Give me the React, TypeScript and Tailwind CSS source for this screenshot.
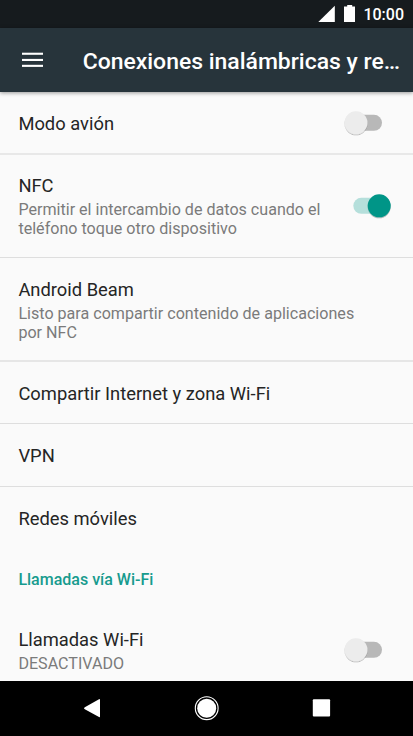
import React from "react";

function Toggle({ on = false }: { on?: boolean }) {
  return (
    <svg className="block h-8 w-[60px] shrink-0" viewBox="0 0 60 32" role="switch" aria-checked={on}>
      <defs>
        <filter id="thumb-shadow" x="-30%" y="-30%" width="160%" height="170%">
          <feDropShadow dx="0" dy="0.9" stdDeviation="0.7" floodColor="#000" floodOpacity="0.32" />
        </filter>
      </defs>
      <rect x={on ? 13.3 : 9} y="7.8" width="33" height="16" rx="8" fill={on ? "#b5dfdb" : "#b8b8b8"} />
      <circle cx={on ? 39.2 : 16} cy="15.8" r="11.5" fill={on ? "#009587" : "#ececec"} filter="url(#thumb-shadow)" />
    </svg>
  );
}

function Title({ children }: { children: React.ReactNode }) {
  return <div className="text-[18.35px] leading-[26px] whitespace-nowrap text-[#252525]">{children}</div>;
}

function Summary({ children }: { children: React.ReactNode }) {
  return <div className="pt-px text-[16.1px] leading-[19px] whitespace-nowrap text-[#7b7b7b]">{children}</div>;
}

export default function App() {
  return (
    <div className="flex h-[736px] w-[413px] flex-col overflow-hidden bg-[#fafafa] font-['Roboto',sans-serif]">
      <div className="flex h-7 shrink-0 items-center justify-end bg-[#161b1e] pr-[9px] text-white">
        <svg className="block h-7 w-[46px]" viewBox="0 0 46 28" fill="#fff">
          <path d="M1.3 22H17.8V5.7Z" />
          <path d="M30.2 5H35.2V6.5H38V22H27V6.5H30.2Z" />
        </svg>
        <span className="w-[41px] pt-0.5 text-right text-base leading-7 font-medium whitespace-nowrap">10:00</span>
      </div>
      <header className="z-10 flex h-16 shrink-0 items-center bg-[#27343b] pl-[21.5px] shadow-[0_1px_4px_rgba(0,0,0,0.4)]">
        <svg className="block h-4 w-[21.5px]" viewBox="0 0 21.5 16" fill="#fff">
          <rect y="0.7" width="21.5" height="2.1" />
          <rect y="6.9" width="21.5" height="2.1" />
          <rect y="12.8" width="21.5" height="2.1" />
        </svg>
        <h1 className="ml-[39.7px] pt-[3px] text-[22.95px] leading-8 font-medium whitespace-nowrap text-white">
          Conexiones inalámbricas y re…
        </h1>
      </header>
      <main className="flex min-h-0 flex-1 flex-col overflow-hidden pt-px">
        <section className="flex h-[62px] shrink-0 items-center justify-between border-b-2 border-[#e8e8e8] pr-[13px] pb-px pl-[18.4px]">
          <div className="pt-[2px]">
            <Title>Modo avión</Title>
          </div>
          <Toggle />
        </section>
        <section className="flex h-[103px] shrink-0 items-center justify-between border-b border-[#dedede] pr-[13px] pb-px pl-[18.4px]">
          <div className="pb-px">
            <Title>NFC</Title>
            <Summary>Permitir el intercambio de datos cuando el<br />teléfono toque otro dispositivo</Summary>
          </div>
          <Toggle on />
        </section>
        <section className="flex h-[104px] shrink-0 flex-col justify-center border-b-2 border-[#e6e6e6] pl-[18.4px]">
          <Title>Android Beam</Title>
          <Summary>Listo para compartir contenido de aplicaciones<br />por NFC</Summary>
        </section>
        <section className="flex h-[62px] shrink-0 items-center border-b border-[#dedede] pt-[2px] pl-[18.4px]">
          <Title>Compartir Internet y zona Wi-Fi</Title>
        </section>
        <section className="flex h-[63px] shrink-0 items-center border-b border-[#dedede] pt-[2px] pl-[18.4px]">
          <Title>VPN</Title>
        </section>
        <section className="flex h-[63px] shrink-0 items-center pl-[18.4px]">
          <Title>Redes móviles</Title>
        </section>
        <h2 className="flex h-[60px] shrink-0 items-center pl-[18.4px] text-[16px] font-medium text-[#179b8e]">
          Llamadas vía Wi-Fi
        </h2>
        <section className="flex h-[80px] shrink-0 items-center justify-between pr-[13px] pl-[18.4px]">
          <div className="pb-px">
            <Title>Llamadas Wi-Fi</Title>
            <Summary>DESACTIVADO</Summary>
          </div>
          <Toggle />
        </section>
      </main>
      <nav className="flex h-[55px] shrink-0 items-center justify-center gap-[87px] bg-black pb-px">
        <svg className="block h-7 w-7" viewBox="0 0 28 28" fill="#fff">
          <path d="M6.8 13.2L21 5.2Q22 4.8 22 6V22.4Q22 23.6 21 23L6.8 15.2Q5 14.2 6.8 13.2Z" />
        </svg>
        <svg className="block h-7 w-7" viewBox="0 0 28 28">
          <circle cx="13.7" cy="14.2" r="11.4" fill="none" stroke="#fff" strokeWidth="1.1" />
          <circle cx="13.7" cy="14.2" r="9.5" fill="#fff" />
        </svg>
        <svg className="block h-7 w-7" viewBox="0 0 28 28" fill="#fff">
          <rect x="4.8" y="5.3" width="17.3" height="17.3" rx="1" />
        </svg>
      </nav>
    </div>
  );
}
